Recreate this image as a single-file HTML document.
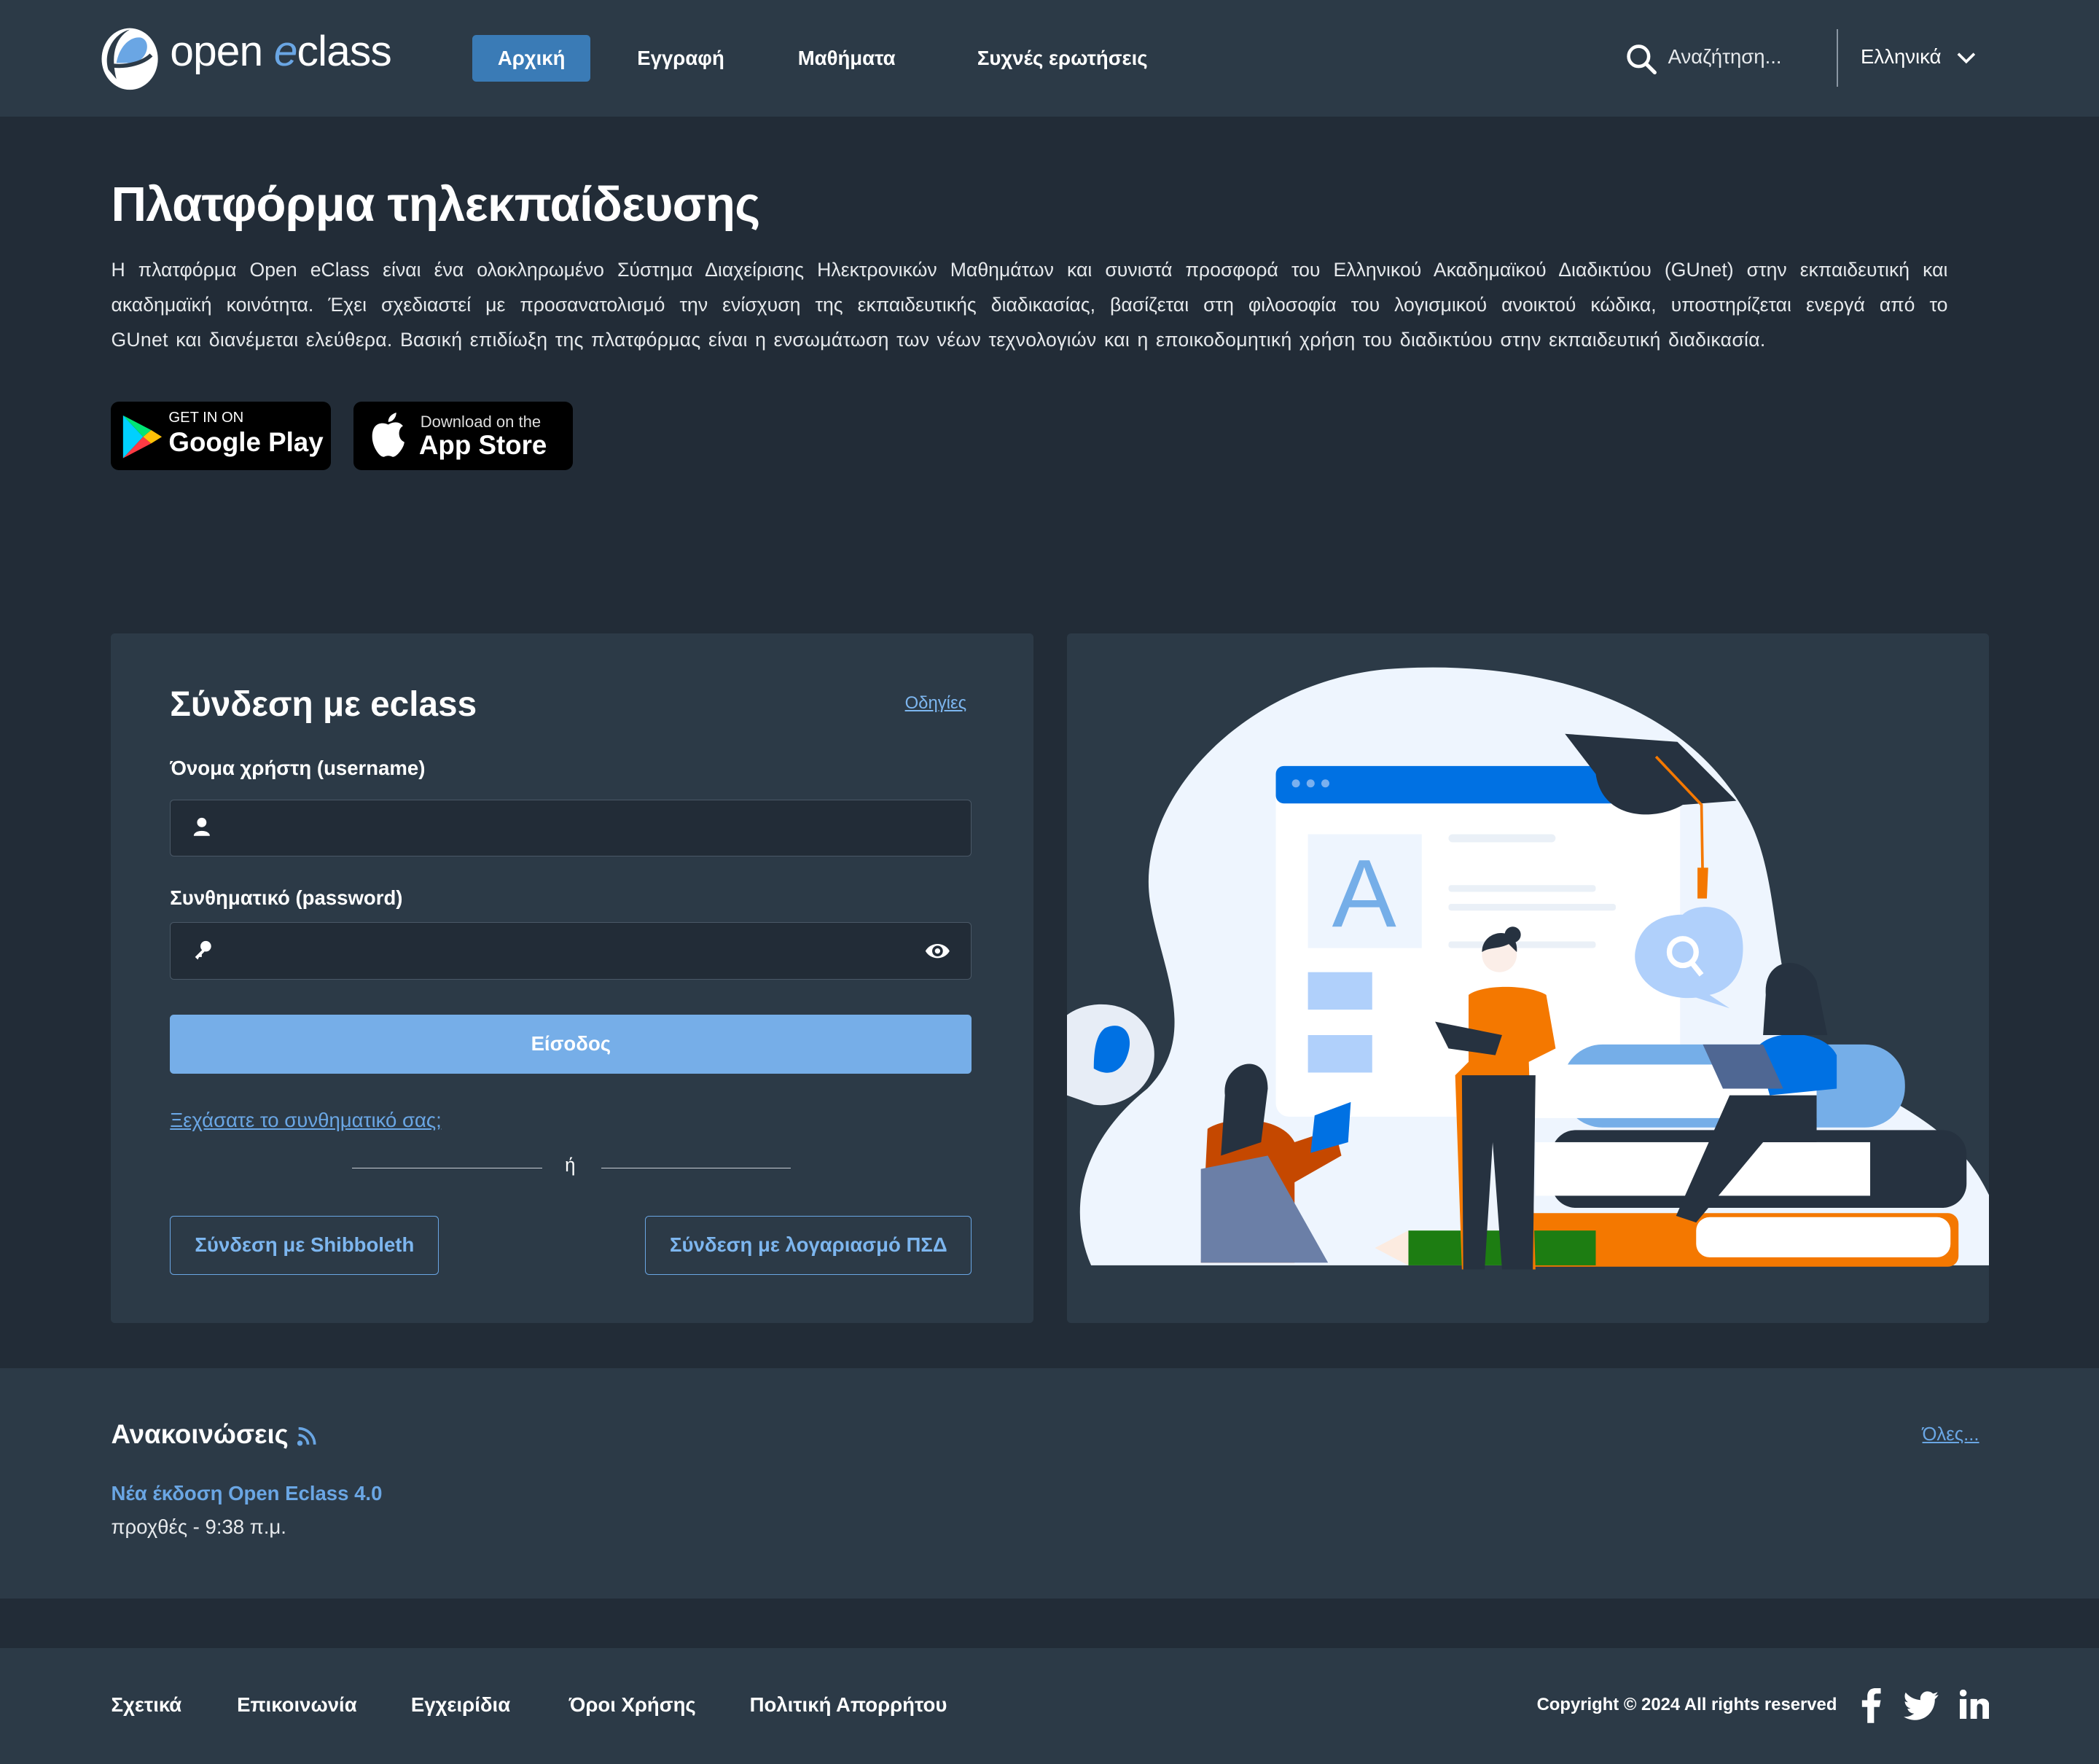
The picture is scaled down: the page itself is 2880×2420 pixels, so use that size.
<!DOCTYPE html>
<html><head><meta charset="utf-8"><style>
*{box-sizing:border-box;margin:0;padding:0}
html,body{width:2880px;height:2420px;overflow:hidden;background:#222c37}
#w{zoom:1.83673;width:1568px;height:1318px;position:relative;font-family:"Liberation Sans","DejaVu Sans",sans-serif;color:#fff}
.abs{position:absolute}
header{position:absolute;left:0;top:0;width:1568px;height:87px;background:#2c3a47}
.nav{position:absolute;top:26px;height:35px;line-height:35px;font-size:15px;font-weight:bold}
h1{position:absolute;left:83px;top:132px;font-size:36.6px;font-weight:bold;letter-spacing:-0.4px}
.intro{position:absolute;left:83px;top:189px;width:1372px;font-size:14.5px;line-height:26px;color:#e6e9ec}
.intro .j{text-align:justify;text-align-last:justify;white-space:nowrap}
.badge{position:absolute;top:300px;width:164px;height:51px;background:#000;border-radius:6px}
.card{position:absolute;top:473px;width:689px;height:515px;background:#2c3a47;border-radius:3px}
.inp{position:absolute;left:44px;width:599px;height:43px;background:#222c37;border:1px solid #4a5866;border-radius:3px}
.lbl{position:absolute;left:44px;font-size:15px;font-weight:bold}
.btn2{position:absolute;top:435px;height:44px;border:1px solid #6aa6e4;border-radius:3px;color:#7db6ef;font-size:15px;font-weight:bold;line-height:42px;text-align:center}
.fl{position:absolute;top:1265px;font-size:15px;font-weight:bold}
</style></head><body><div id="w">
<header>
<svg class="abs" style="left:73px;top:19px" width="48" height="50" viewBox="0 0 48 50"><ellipse cx="24" cy="25" rx="21" ry="23" fill="#fff"/><path d="M8 33 C4 20 12 6 24 3 C12 10 10 24 14 40 Z" fill="#2c3a47"/><path d="M14 28 C16 16 24 8 32 9 C40 11 38 24 28 28 Z" fill="#6aa6e4"/><path d="M12 30 C22 31 34 28 40 22" stroke="#2c3a47" stroke-width="3" fill="none"/></svg>
<div class="abs" style="left:127px;top:20px;font-size:32px;letter-spacing:-0.5px">open <span style="color:#6aa6e4;font-style:italic">e</span>class</div>
<div class="nav" style="left:353px;width:88px;background:#3a7bb6;border-radius:3px;text-align:center">Αρχική</div>
<div class="nav" style="left:476px">Εγγραφή</div>
<div class="nav" style="left:596px">Μαθήματα</div>
<div class="nav" style="left:730px">Συχνές ερωτήσεις</div>
<svg class="abs" style="left:1214px;top:32px" width="24" height="24" viewBox="0 0 24 24"><circle cx="10" cy="10" r="7.5" stroke="#fff" stroke-width="2.5" fill="none"/><path d="M15.5 15.5 L22 22" stroke="#fff" stroke-width="2.8" stroke-linecap="round"/></svg>
<div class="abs" style="left:1246px;top:34px;font-size:15px;color:#e6e9ec">Αναζήτηση...</div>
<div class="abs" style="left:1372px;top:22px;width:1px;height:43px;background:#8a96a3"></div>
<div class="abs" style="left:1390px;top:34px;font-size:15px">Ελληνικά</div>
<svg class="abs" style="left:1462px;top:38px" width="14" height="10" viewBox="0 0 14 10"><path d="M1 2 L7 8 L13 2" stroke="#fff" stroke-width="2" fill="none"/></svg>
</header>
<h1>Πλατφόρμα τηλεκπαίδευσης</h1>
<div class="intro"><div class="j">Η πλατφόρμα Open eClass είναι ένα ολοκληρωμένο Σύστημα Διαχείρισης Ηλεκτρονικών Μαθημάτων και συνιστά προσφορά του Ελληνικού Ακαδημαϊκού Διαδικτύου (GUnet) στην εκπαιδευτική και</div><div class="j">ακαδημαϊκή κοινότητα. Έχει σχεδιαστεί με προσανατολισμό την ενίσχυση της εκπαιδευτικής διαδικασίας, βασίζεται στη φιλοσοφία του λογισμικού ανοικτού κώδικα, υποστηρίζεται ενεργά από το</div><div style="word-spacing:1.5px;letter-spacing:0.15px">GUnet και διανέμεται ελεύθερα. Βασική επιδίωξη της πλατφόρμας είναι η ενσωμάτωση των νέων τεχνολογιών και η εποικοδομητική χρήση του διαδικτύου στην εκπαιδευτική διαδικασία.</div></div>
<div class="badge" style="left:83px"><svg class="abs" style="left:8px;top:9px" width="32" height="34" viewBox="0 0 32 34"><path d="M1 1 L16 17 L1 33 Z" fill="#00d0ff"/><path d="M1 1 L22 12 L16 17 Z" fill="#00e676"/><path d="M1 33 L22 22 L16 17 Z" fill="#ff3a44"/><path d="M22 12 L30 17 L22 22 L16 17Z" fill="#ffc107"/></svg>
<div class="abs" style="left:43px;top:6px;font-size:11px">GET IN ON</div><div class="abs" style="left:43px;top:19px;font-size:20px;font-weight:bold">Google Play</div></div>
<div class="badge" style="left:264px"><svg class="abs" style="left:12px;top:8px" width="28" height="34" viewBox="0 0 28 34"><path d="M14 9 C10 7 2 7 2 18 C2 26 8 34 11 33 C13 32 15 32 17 33 C20 34 26 26 26 22 C21 20 21 12 25 10 C22 6 17 7 14 9Z M14 7 C14 3 17 1 20 0 C20 4 17 7 14 7Z" fill="#fff"/></svg>
<div class="abs" style="left:50px;top:8px;font-size:12px;color:#ddd">Download on the</div><div class="abs" style="left:49px;top:21px;font-size:20px;font-weight:bold">App Store</div></div>

<div class="card" style="left:83px">
<div class="abs" style="left:44px;top:38px;font-size:26px;font-weight:bold">Σύνδεση με eclass</div>
<div class="abs" style="left:593px;top:45px;font-size:13px;color:#7db6ef;text-decoration:underline">Οδηγίες</div>
<div class="lbl" style="top:92px">Όνομα χρήστη (username)</div>
<div class="inp" style="top:124px"><svg class="abs" style="left:16px;top:13px" width="14" height="15" viewBox="0 0 14 15"><circle cx="7" cy="4" r="3.5" fill="#fff"/><path d="M1 14 C1 9 13 9 13 14Z" fill="#fff"/></svg></div>
<div class="lbl" style="top:189px">Συνθηματικό (password)</div>
<div class="inp" style="top:216px"><svg class="abs" style="left:16px;top:12px" width="16" height="16" viewBox="0 0 16 16"><circle cx="10" cy="5" r="4" fill="#fff"/><path d="M8 7 L2 13 L4 15 L5 13 L7 13 L7 11 L9 9Z" fill="#fff"/></svg><svg class="abs" style="left:563px;top:13px" width="20" height="16" viewBox="0 0 20 16"><path d="M1 8 C5 1 15 1 19 8 C15 15 5 15 1 8Z" fill="#fff"/><circle cx="10" cy="8" r="4" fill="#222c37"/><circle cx="10" cy="8" r="2" fill="#fff"/></svg></div>
<div class="abs" style="left:44px;top:285px;width:599px;height:44px;background:#76aee8;border-radius:3px;text-align:center;line-height:44px;font-size:15px;font-weight:bold">Είσοδος</div>
<div class="abs" style="left:44px;top:355px;font-size:15px;color:#6aa6e4;text-decoration:underline">Ξεχάσατε το συνθηματικό σας;</div>
<div class="abs" style="left:180px;top:399px;width:142px;height:1px;background:#c8ced4"></div>
<div class="abs" style="left:339px;top:390px;font-size:14px">ή</div>
<div class="abs" style="left:366px;top:399px;width:142px;height:1px;background:#c8ced4"></div>
<div class="btn2" style="left:44px;width:201px">Σύνδεση με Shibboleth</div>
<div class="btn2" style="left:399px;width:244px">Σύνδεση με λογαριασμό ΠΣΔ</div>
</div>

<div class="card" style="left:797px;overflow:hidden">
<svg width="689" height="515" viewBox="0 0 689 515">
<path d="M18 472 C0 430 10 380 60 340 C100 300 70 250 62 200 C50 120 140 30 250 26 C370 20 470 60 510 140 C540 200 520 300 580 330 C640 360 670 380 689 420 L689 472Z" fill="#eef5fe"/>
<path d="M0 285 C20 270 60 275 65 310 C68 340 40 355 20 352 L0 345Z" fill="#e7edf6"/>
<path d="M28 295 C42 288 52 300 44 318 C38 330 28 330 20 325 C20 310 22 300 28 295Z" fill="#0071e3"/>
<rect x="156" y="99" width="302" height="262" rx="10" fill="#fff"/>
<rect x="156" y="99" width="302" height="28" rx="6" fill="#0071e3"/>
<circle cx="171" cy="112" r="3" fill="#7ab0ef"/><circle cx="182" cy="112" r="3" fill="#7ab0ef"/><circle cx="193" cy="112" r="3" fill="#7ab0ef"/>
<rect x="180" y="150" width="85" height="85" fill="#eef5fe"/>
<text x="222" y="219" font-family="Liberation Sans" font-size="72" fill="#75aee8" text-anchor="middle">A</text>
<rect x="180" y="253" width="48" height="28" fill="#b0d0fb"/><rect x="180" y="300" width="48" height="28" fill="#b0d0fb"/>
<rect x="285" y="150" width="80" height="6" rx="3" fill="#eaf0f7"/><rect x="285" y="188" width="110" height="5" rx="2" fill="#eaf0f7"/><rect x="285" y="202" width="125" height="5" rx="2" fill="#eaf0f7"/><rect x="285" y="230" width="110" height="5" rx="2" fill="#eaf0f7"/>
<path d="M372 75 L456 81 L500 125 L460 128 C440 140 400 140 395 105Z" fill="#263240"/>
<path d="M440 92 L474 128 L475 190" stroke="#f47800" stroke-width="2" fill="none"/><path d="M471 175 L479 175 L478 198 L471 198Z" fill="#f47800"/>
<path d="M460 210 C470 200 505 200 505 235 C505 260 490 268 480 270 L495 280 L470 272 C440 275 420 255 425 235 C428 220 440 210 460 210Z" fill="#b0d0fb"/>
<circle cx="460" cy="238" r="10" stroke="#fff" stroke-width="4" fill="none"/><path d="M466 245 L474 255" stroke="#fff" stroke-width="4"/>
<rect x="370" y="307" width="256" height="62" rx="30" fill="#75aee8"/><rect x="340" y="322" width="220" height="40" fill="#fff"/>
<rect x="362" y="371" width="310" height="58" rx="18" fill="#263240"/><rect x="350" y="380" width="250" height="40" fill="#fff"/>
<rect x="330" y="433" width="336" height="40" rx="8" fill="#f47800"/><rect x="470" y="436" width="190" height="30" rx="10" fill="#fff"/>
<rect x="255" y="446" width="140" height="26" fill="#1d7d12"/><path d="M230 459 L255 446 L255 472Z" fill="#fcebe0"/>
<path d="M300 270 C310 262 345 262 358 270 L365 310 L345 320 L350 475 L330 475 L318 360 L310 475 L295 475 L290 330 L300 320Z" fill="#f47800"/><path d="M295 330 L350 330 L348 475 L325 475 L318 380 L312 475 L296 475Z" fill="#263240"/>
<circle cx="323" cy="240" r="13" fill="#fbeee8"/><path d="M310 238 C310 220 338 218 336 238 L330 232 C322 236 316 234 310 238Z" fill="#263240"/><circle cx="333" cy="225" r="6" fill="#263240"/>
<path d="M275 290 L325 300 L320 315 L285 310Z" fill="#263240"/>
<path d="M515 310 C525 295 565 295 575 315 L575 340 L525 345Z" fill="#0071e3"/><circle cx="538" cy="262" r="14" fill="#fbeee8"/><path d="M522 270 C520 240 552 240 560 260 L568 300 L520 300Z" fill="#263240"/>
<path d="M475 307 L520 307 L535 340 L490 340Z" fill="#4f6793"/>
<path d="M495 345 L560 345 L560 380 L520 380 L470 440 L455 435Z" fill="#263240"/>
<path d="M105 370 C120 360 160 360 170 380 L200 370 L205 390 L170 410 L170 470 L100 470Z" fill="#c54800"/><path d="M100 400 L150 390 L195 470 L100 470Z" fill="#6b7fa7"/>
<circle cx="135" cy="340" r="14" fill="#fbeee8"/><path d="M118 345 C115 320 150 310 150 340 L145 380 L115 390Z" fill="#263240"/>
<path d="M185 360 L212 350 L210 380 L182 388Z" fill="#0071e3"/>
</svg>
</div>

<div class="abs" style="left:0;top:1022px;width:1568px;height:172px;background:#2c3a47"></div>
<div class="abs" style="left:83px;top:1060px;font-size:20px;font-weight:bold">Ανακοινώσεις <svg width="16" height="16" viewBox="0 0 16 16" style="vertical-align:-3px"><circle cx="3" cy="13" r="2" fill="#6aa6e4"/><path d="M2 7 A7 7 0 0 1 9 14 M2 2 A12 12 0 0 1 14 14" stroke="#6aa6e4" stroke-width="2" fill="none"/></svg></div>
<div class="abs" style="left:1436px;top:1064px;font-size:14px;color:#6aa6e4;text-decoration:underline">Όλες...</div>
<div class="abs" style="left:83px;top:1107px;font-size:15px;font-weight:bold;color:#6aa6e4">Νέα έκδοση Open Eclass 4.0</div>
<div class="abs" style="left:83px;top:1132px;font-size:15px;color:#e6e9ec">προχθές - 9:38 π.μ.</div>

<div class="abs" style="left:0;top:1231px;width:1568px;height:87px;background:#2c3a47"></div>
<div class="fl" style="left:83px">Σχετικά</div><div class="fl" style="left:177px">Επικοινωνία</div><div class="fl" style="left:307px">Εγχειρίδια</div><div class="fl" style="left:425px">Όροι Χρήσης</div><div class="fl" style="left:560px">Πολιτική Απορρήτου</div>
<div class="abs" style="left:1148px;top:1266px;font-size:13px;font-weight:bold">Copyright © 2024 All rights reserved</div>
<svg class="abs" style="left:1390px;top:1261px" width="16" height="26" viewBox="0 0 16 26"><path d="M10 26 V14 H14 L15 9 H10 V6 C10 4.5 11 4 12 4 H15 V0 H11 C7 0 5 2.5 5 6 V9 H1 V14 H5 V26Z" fill="#fff"/></svg>
<svg class="abs" style="left:1422px;top:1263px" width="26" height="22" viewBox="0 0 24 20"><path d="M24 2.4 C23 2.8 22.2 3 21.2 3.1 C22.2 2.5 23 1.5 23.4 0.4 C22.4 1 21.3 1.4 20.2 1.6 C18.3 -0.4 15 -0.5 13 1.4 C11.7 2.6 11.2 4.4 11.6 6 C7.6 5.8 3.9 3.9 1.4 0.8 C0.1 3.1 0.8 6 3 7.5 C2.2 7.5 1.4 7.2 0.8 6.9 C0.8 9.3 2.5 11.3 4.8 11.8 C4.1 12 3.3 12 2.6 11.9 C3.2 13.9 5.1 15.3 7.2 15.3 C5.1 17 2.5 17.8 0 17.5 C2.3 19 5 19.8 7.6 19.8 C16.7 19.8 21.7 12.2 21.5 5.4 C22.5 4.6 23.3 3.6 24 2.4Z" fill="#fff"/></svg>
<svg class="abs" style="left:1464px;top:1262px" width="22" height="22" viewBox="0 0 22 22"><rect x="0" y="7" width="5" height="15" fill="#fff"/><circle cx="2.5" cy="2.5" r="2.6" fill="#fff"/><path d="M8 7 H13 V9 C14 7 16 6.6 18 6.8 C21 7.2 22 9.5 22 12 V22 H17 V13 C17 11.5 16 10.5 14.8 10.5 C13.5 10.5 12.8 11.5 12.8 13 V22 H8Z" fill="#fff"/></svg>
</div></body></html>
